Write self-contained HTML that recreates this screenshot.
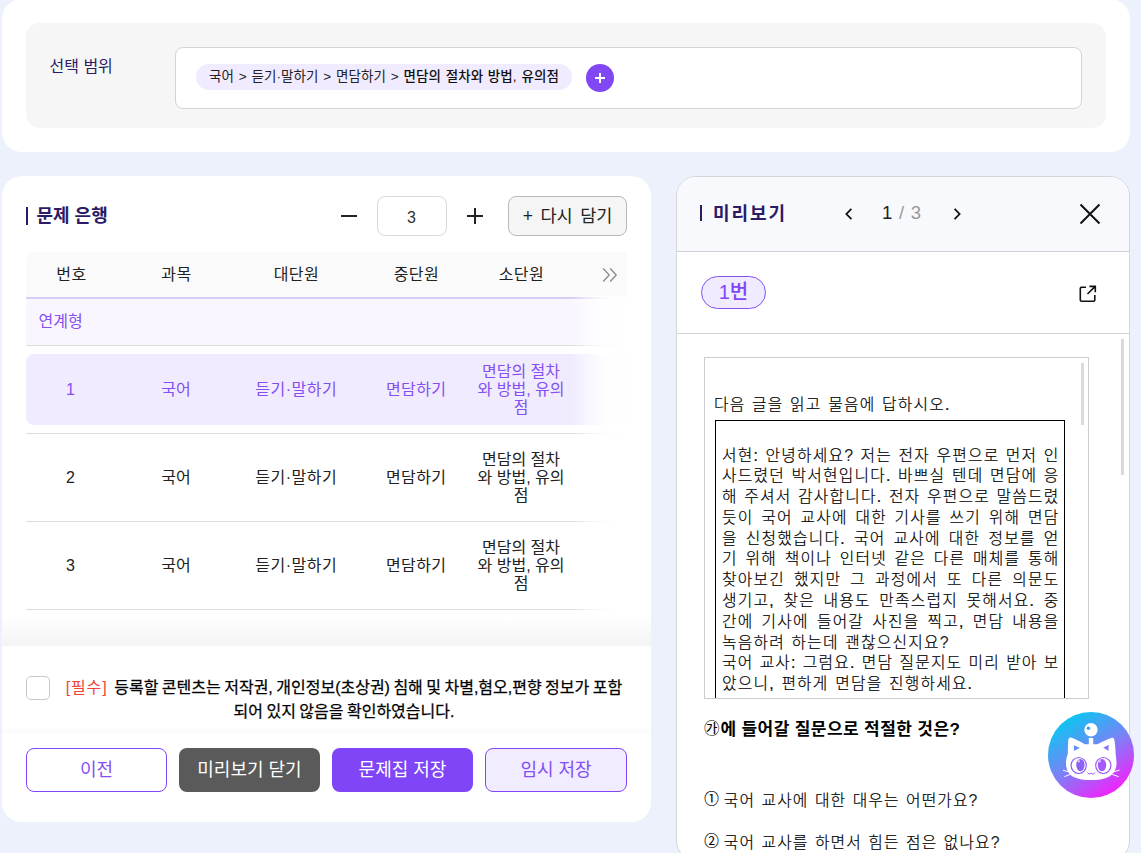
<!DOCTYPE html>
<html lang="ko">
<head>
<meta charset="utf-8">
<title>문제 은행</title>
<style>
*{box-sizing:border-box;margin:0;padding:0}
html,body{width:1141px;height:853px;overflow:hidden}
body{background:#edf1fc;font-family:"Liberation Sans","Noto Sans CJK KR",sans-serif;color:#222;position:relative}
.abs{position:absolute;white-space:nowrap}
.card{position:absolute;background:#fff;border-radius:20px}
/* ---------- top card ---------- */
#top{left:2px;top:-1px;width:1128px;height:153px}
#gray{left:26px;top:23px;width:1080px;height:105px;background:#f6f6f6;border-radius:14px}
#lbl{left:49.5px;top:54.5px;font-size:16px;line-height:24px;color:#2b1a66}
#inp{left:175px;top:47px;width:907px;height:62px;background:#fff;border:1px solid #d4d4d4;border-radius:8px}
#chip{left:196px;top:64px;width:376px;height:26px;border-radius:13px;background:#f0ebff;font-size:13.5px;line-height:26px;text-align:center;color:#222;word-spacing:.9px;letter-spacing:.08px}
#chip b{font-weight:500;color:#111}
#plus{left:586px;top:64px;width:28px;height:28px;border-radius:50%;background:#8247f5}
#plus:before,#plus:after{content:"";position:absolute;background:#fff;left:9px;top:13.25px;width:10px;height:1.5px}
#plus:after{left:13.25px;top:9px;width:1.5px;height:10px}
/* ---------- left card ---------- */
#left{left:2px;top:176px;width:649px;height:646px;overflow:hidden}
#ttlbar{left:26px;top:207px;width:2px;height:18px;background:#2b1a66}
#ttl{left:36.5px;top:204px;font-size:18px;line-height:24px;font-weight:700;color:#2b1a66}
#minus{left:341px;top:215px;width:16px;height:2px;background:#222}
#cnt{left:377px;top:196px;width:70px;height:40px;border:1px solid #d9d9d9;border-radius:8px;background:#fff;text-align:center;font-size:16px;line-height:41px;color:#333;padding-right:1px}
#pl1{left:467px;top:215.1px;width:16px;height:1.8px;background:#222}
#pl2{left:474.1px;top:208px;width:1.8px;height:16px;background:#222}
#again{left:508px;top:196px;width:119px;height:40px;border:1px solid #b9b9b9;border-radius:8px;background:#f5f5f5;text-align:center;font-size:17.5px;line-height:39px;color:#222;word-spacing:2.7px}
#thead{left:26px;top:252px;width:601px;height:47px;background:#fafafa;border-radius:8px 0 0 0;border-bottom:2px solid #dacdf6}
.th{position:absolute;top:263.3px;letter-spacing:.4px;text-indent:.8px;font-size:16px;line-height:24px;color:#222;text-align:center;white-space:nowrap}
.c1{left:26px;width:90px}.c2{left:116px;width:120px}.c3{left:236px;width:120px}.c4{left:356px;width:120px}.c5{left:476px;width:90px}
#grp{left:26px;top:299px;width:601px;height:47px;background:#f9f6ff;border-bottom:1px solid #dcdcdc}
#grpt{left:38.5px;top:310px;font-size:16px;line-height:24px;color:#8450f2}
#sel{left:26px;top:354px;width:601px;height:71px;background:#f0ebff;border-radius:8px 0 0 8px}
.ln{position:absolute;left:26px;width:601px;height:1px;background:#dcdcdc}
.td{position:absolute;font-size:16px;line-height:24px;text-align:center;white-space:nowrap;color:#222}
.r1{top:378px;color:#8450f2}.r2{top:466px}.r3{top:554px}
.sm{line-height:18px;white-space:normal}
.r1.sm{top:363px}.r2.sm{top:451px}.r3.sm{top:539px}
#fade{left:571px;top:296px;width:56px;height:330px;background:linear-gradient(to right,rgba(255,255,255,0) 0,rgba(255,255,255,.55) 30%,rgba(255,255,255,.9) 60%,rgba(255,255,255,.97) 100%)}
#shadow{left:2px;top:616px;width:649px;height:30px;background:linear-gradient(to bottom,rgba(244,244,245,0),rgba(244,244,245,1))}
#foot{left:2px;top:646px;width:649px;height:176px;background:#fff;border-radius:0 0 20px 20px}
#chk{left:26px;top:676px;width:24px;height:24px;border:1px solid #c8c8c8;border-radius:5px;background:#fff}
#agree{left:64px;top:676px;width:560px;font-size:16px;line-height:24px;text-align:center;white-space:normal;color:#000;font-weight:400;-webkit-text-stroke:.25px #000;word-spacing:-1px}
#agree i{font-style:normal;color:#f0443c;font-weight:400;-webkit-text-stroke:0;letter-spacing:.8px}
.btn{position:absolute;top:748px;height:44px;border-radius:8px;font-size:18px;line-height:42px;text-align:center;white-space:nowrap}
#b1{left:26px;width:141px;border:1.3px solid #7f45f7;color:#8450f2;background:#fff}
#b2{left:179px;width:141px;background:#5a5a5a;color:#fff;line-height:44px;font-weight:400}
#b3{left:332px;width:141px;background:#7f45f7;color:#fff;line-height:44px;font-weight:400}
#b4{left:485px;width:142px;border:1.3px solid #7f45f7;color:#8450f2;background:#f1ecff}
/* ---------- right panel ---------- */
#panel{left:676px;top:176px;width:454px;height:685px;background:#fff;border:1px solid #d6d6da;border-radius:20px;overflow:hidden}
#phead{left:-1px;top:0;width:460px;height:75px;background:#f8f9fd;border-bottom:1px solid #d0d0d2}
#pline2{left:-1px;top:156px;width:460px;height:1px;background:#d4d4d6}

#pbar{left:21.5px;top:27.5px;width:2.5px;height:16px;background:#2b1a66}
#pttl{left:35px;top:23px;font-size:18px;line-height:28px;font-weight:700;color:#2b1a66;letter-spacing:1.9px}
#pg{left:204px;top:22.2px;font-size:18.5px;line-height:28px;color:#222;word-spacing:1.5px}
#pg span{color:#999}
#pill{left:23px;top:99px;width:65px;height:33px;border:1px solid #8450f2;border-radius:17px;background:#f0ebff;color:#7f45f7;font-size:20px;line-height:31px;text-align:center;font-weight:500}
#vsb{left:443px;top:162px;width:3px;height:136px;background:#d9d9d9}
#ifr{left:26px;top:180px;width:385px;height:342px;border:1px solid #ccc;background:#fff;overflow:hidden}
#isb{left:375.5px;top:5px;width:3px;height:62px;background:#dbdbdb}
.pv{font-family:"Liberation Sans","Noto Sans CJK KR",sans-serif;font-weight:300;-webkit-text-stroke:.2px #000;color:#000}
#q0{left:9px;top:36px;font-size:15.8px;line-height:22px;letter-spacing:1.2px;word-spacing:1px}
#box{left:10px;top:62px;width:350px;height:400px;border:1.3px solid #000;border-top-width:1px}
#para{left:6px;top:24.5px;width:337.5px;font-size:15.8px;line-height:20.8px;white-space:normal;letter-spacing:1.2px}
#para div{text-align:justify;text-align-last:justify;white-space:nowrap;height:20.8px}
#para div.l{text-align:left;text-align-last:left;letter-spacing:1.2px;word-spacing:1px}
#qq{left:26px;top:538px;font-size:17px;line-height:28px;font-weight:700;color:#000;letter-spacing:.4px;-webkit-text-stroke:0}
.op{position:absolute;left:25px;font-size:15.8px;line-height:28px;white-space:nowrap;letter-spacing:1.1px;word-spacing:1px}
#cat{left:1048px;top:712px}
.pv u{text-decoration:none;-webkit-text-stroke:0;color:#222}
.cn{font-size:14.6px;line-height:0;vertical-align:1.3px;margin-left:1.2px;margin-right:-2.6px;font-weight:350}
.td.c3{letter-spacing:.5px;text-indent:.5px}.td.c4{letter-spacing:.3px;text-indent:.3px}.td.c1{text-indent:-1px}
</style>
</head>
<body>
<div class="card" id="top"></div>
<div class="abs" id="gray"></div>
<div class="abs" id="lbl">선택 범위</div>
<div class="abs" id="inp"></div>
<div class="abs" id="chip">국어 &gt; 듣기·말하기 &gt; 면담하기 &gt; <b>면담의 절차와 방법, 유의점</b></div>
<div class="abs" id="plus"></div>

<div class="card" id="left"></div>
<div class="abs" id="ttlbar"></div>
<div class="abs" id="ttl">문제 은행</div>
<div class="abs" id="minus"></div>
<div class="abs" id="cnt">3</div>
<div class="abs" id="pl1"></div><div class="abs" id="pl2"></div>
<div class="abs" id="again">+ 다시 담기</div>
<div class="abs" id="thead"></div>
<div class="th c1">번호</div><div class="th c2">과목</div><div class="th c3">대단원</div><div class="th c4">중단원</div><div class="th c5">소단원</div>
<svg class="abs" id="dbl" style="left:602px;top:267px" width="16" height="16" viewBox="0 0 16 16" fill="none" stroke="#8a8a8a" stroke-width="1.3"><path d="M1.2 1.5 L7.2 8 L1.2 14.5 M8.2 1.5 L14.2 8 L8.2 14.5"/></svg>
<div class="abs" id="grp"></div>
<div class="abs" id="grpt">연계형</div>
<div class="abs" id="sel"></div>
<div class="ln" style="top:433px"></div><div class="ln" style="top:521px"></div><div class="ln" style="top:609px"></div>

<div class="td c1 r1">1</div><div class="td c2 r1">국어</div><div class="td c3 r1">듣기·말하기</div><div class="td c4 r1">면담하기</div><div class="td c5 r1 sm">면담의 절차<br>와 방법, 유의<br>점</div>
<div class="td c1 r2">2</div><div class="td c2 r2">국어</div><div class="td c3 r2">듣기·말하기</div><div class="td c4 r2">면담하기</div><div class="td c5 r2 sm">면담의 절차<br>와 방법, 유의<br>점</div>
<div class="td c1 r3">3</div><div class="td c2 r3">국어</div><div class="td c3 r3">듣기·말하기</div><div class="td c4 r3">면담하기</div><div class="td c5 r3 sm">면담의 절차<br>와 방법, 유의<br>점</div>
<div class="abs" id="fade"></div>
<div class="abs" id="shadow"></div>
<div class="abs" id="foot"></div>
<div class="abs" style="left:2px;top:726px;width:649px;height:7px;background:linear-gradient(to bottom,rgba(0,0,0,0),rgba(0,0,0,.016))"></div>
<div class="abs" id="chk"></div>
<div class="abs" id="agree"><i>[필수]</i>&nbsp; 등록할 콘텐츠는 저작권, 개인정보(초상권) 침해 및 차별,혐오,편향 정보가 포함<br>되어 있지 않음을 확인하였습니다.</div>
<div class="btn" id="b1">이전</div>
<div class="btn" id="b2">미리보기 닫기</div>
<div class="btn" id="b3">문제집 저장</div>
<div class="btn" id="b4">임시 저장</div>

<div class="abs" id="panel"><div class="abs" id="pin" style="left:1px;top:0;width:452px;height:700px">
  <div class="abs" id="phead"></div>
  <div class="abs" id="pline2"></div>
  <div class="abs" id="pbar"></div>
  <div class="abs" id="pttl">미리보기</div>
  <svg class="abs" style="left:164.8px;top:29px" width="12" height="16" viewBox="0 0 12 16" fill="none" stroke="#111" stroke-width="1.8"><path d="M8.4 2.8 L3.4 8 L8.4 13.2"/></svg>
  <div class="abs" id="pg">1 <span>/ 3</span></div>
  <svg class="abs" style="left:273.3px;top:29px" width="12" height="16" viewBox="0 0 12 16" fill="none" stroke="#111" stroke-width="1.8"><path d="M3.6 2.8 L8.6 8 L3.6 13.2"/></svg>
  <svg class="abs" style="left:400px;top:25px" width="24" height="24" viewBox="0 0 24 24" fill="none" stroke="#111" stroke-width="2"><path d="M2.5 2.5 L21.5 21.5 M21.5 2.5 L2.5 21.5"/></svg>
  <div class="abs" id="pill">1번</div>
  <svg class="abs" style="left:399px;top:106px" width="22" height="22" viewBox="0 0 22 22" fill="none" stroke="#111" stroke-width="1.6"><path d="M9 4.2 H4.5 Q3.3 4.2 3.3 5.4 V17 Q3.3 18.2 4.5 18.2 H16.6 Q17.8 18.2 17.8 17 V12"/><path d="M10.5 11 L18.2 3.4 M12.4 3.4 H18.3 V9.3"/></svg>
  <div class="abs" id="vsb"></div>
  <div class="abs" id="ifr">
    <div class="abs" id="isb"></div>
    <div class="abs pv" id="q0">다음 글을 읽고 물음에 답하시오.</div>
    <div class="abs" id="box">
      <div class="abs pv" id="para">
<div>서현: 안녕하세요<u>?</u> 저는 전자 우편으로 먼저 인</div>
<div>사드렸던 박서현입니다. 바쁘실 텐데 면담에 응</div>
<div>해 주셔서 감사합니다. 전자 우편으로 말씀드렸</div>
<div>듯이 국어 교사에 대한 기사를 쓰기 위해 면담</div>
<div>을 신청했습니다. 국어 교사에 대한 정보를 얻</div>
<div>기 위해 책이나 인터넷 같은 다른 매체를 통해</div>
<div>찾아보긴 했지만 그 과정에서 또 다른 의문도</div>
<div>생기고, 찾은 내용도 만족스럽지 못해서요. 중</div>
<div>간에 기사에 들어갈 사진을 찍고, 면담 내용을</div>
<div class="l">녹음하려 하는데 괜찮으신지요<u>?</u></div>
<div>국어 교사: 그럼요. 면담 질문지도 미리 받아 보</div>
<div class="l">았으니, 편하게 면담을 진행하세요.</div>
      </div>
    </div>
  </div>
  <div class="abs pv" id="qq"><span style="font-weight:400;font-size:15.5px;vertical-align:1px;margin-right:.5px">㉮</span>에 들어갈 질문으로 적절한 것은?</div>
  <div class="op pv" style="top:609.5px"><span class="cn">①</span> 국어 교사에 대한 대우는 어떤가요<u>?</u></div>
  <div class="op pv" style="top:651.5px"><span class="cn">②</span> 국어 교사를 하면서 힘든 점은 없나요<u>?</u></div>
</div></div>
<svg class="abs" id="cat" width="86" height="86" viewBox="0 0 86 86">
  <defs><linearGradient id="cg" x1="0.2" y1="0.02" x2="0.8" y2="0.98"><stop offset="0" stop-color="#00cdf0"/><stop offset="0.5" stop-color="#7a82f6"/><stop offset="1" stop-color="#ff18fc"/></linearGradient></defs>
  <circle cx="43" cy="43" r="43" fill="url(#cg)"/>
  <circle cx="43" cy="17.8" r="6.7" fill="#fff"/>
  <circle cx="40.4" cy="16.2" r="1.8" fill="#3fa2f4"/>
  <rect x="40.8" y="25.9" width="4.4" height="7.5" fill="#fff"/>
  <path fill="#fff" d="M22.8 25.6 C21 25.4 20.3 27 20.2 29.5 C19.9 34 19.9 38 19.8 41.7 C18.6 45 17.8 48.5 18 52.2 C18.3 58 21 62.2 24.6 64.5 C30 67.4 36.5 68.1 43 68.1 C49.5 68.1 56 67.4 61.4 64.5 C65 62.2 68.2 58 68.5 52.2 C68.7 48.5 67.9 45 67.6 41.7 C67.5 38 67.4 34 66.6 29.5 C66.4 27 65.8 25.4 64 25.8 C59.5 26.8 53.6 30.4 49.4 32.2 L36.8 32.2 C32.6 30.2 27.2 26.6 22.8 25.6 Z"/>
  <path fill="#5e93f5" d="M25.7 33.2 L31.9 35.7 L26.2 39 Z"/>
  <path fill="#8f74f6" d="M55.2 35.5 L60.8 33.1 L60.4 38.9 Z"/>
  <ellipse cx="30.7" cy="53.5" rx="7.6" ry="8" fill="#fff" stroke="#8a62f6" stroke-width="1.2"/>
  <ellipse cx="55.3" cy="53.5" rx="7.6" ry="8" fill="#fff" stroke="#a058f7" stroke-width="1.2"/>
  <ellipse cx="32.4" cy="53.1" rx="4.2" ry="6.1" fill="#8c63f6"/>
  <ellipse cx="54" cy="53.1" rx="4.2" ry="6.1" fill="#a35af8"/>
  <circle cx="30.8" cy="49.3" r="1.1" fill="#e9defd"/>
  <circle cx="51.8" cy="49.3" r="1.1" fill="#e9defd"/>
  <path fill="none" stroke="#a05af7" stroke-width="1" stroke-linecap="round" d="M39.6 61 Q41.3 63.4 43.2 61.2 Q45.1 63.4 46.9 61"/>
  <path fill="none" stroke="#fff" stroke-width="1" stroke-linecap="round" d="M15.4 58.4 L21 59.9 M16.7 64.5 L21.6 62.6 M65 59.9 L71.2 58.2 M64.6 62.6 L70.3 64.5"/>
</svg>
</body>
</html>
